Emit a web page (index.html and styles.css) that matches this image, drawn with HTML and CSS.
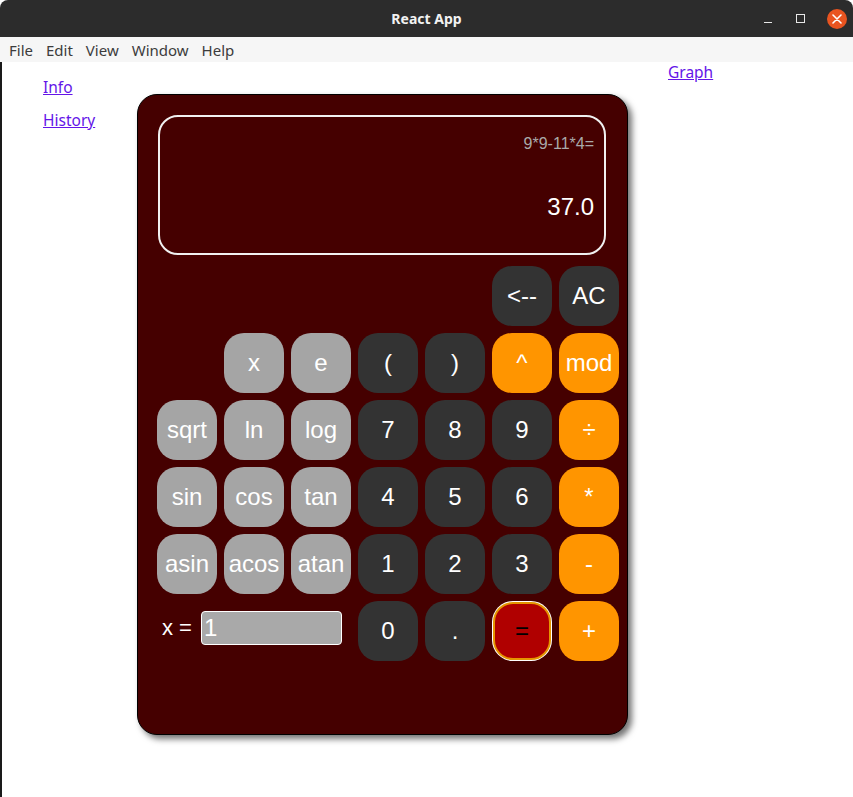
FILE: index.html
```html
<!DOCTYPE html>
<html>
<head>
<meta charset="utf-8">
<title>React App</title>
<link rel="stylesheet" href="styles.css">
</head>
<body>
<div class="titlebar">
  <span class="title">React App</span>
  <div class="controls">
    <span class="ctl-min"></span>
    <span class="ctl-max"></span>
    <span class="ctl-close">
      <svg width="10" height="10" viewBox="0 0 10 10"><path d="M1 1L9 9M9 1L1 9" stroke="#fff" stroke-width="1.6" stroke-linecap="round"/></svg>
    </span>
  </div>
</div>
<div class="menubar">
  <span>File</span><span>Edit</span><span>View</span><span>Window</span><span>Help</span>
</div>
<div class="content">
  <nav class="nav">
    <a href="#" class="link">Info</a>
    <a href="#" class="link">History</a>
  </nav>
  <div class="calc">
    <div class="display">
      <div class="expr">9*9-11*4=</div>
      <div class="result">37.0</div>
    </div>
    <div class="keys">
      <button class="key dark c6">&lt;--</button>
      <button class="key dark">AC</button>

      <button class="key gray c2">x</button>
      <button class="key gray">e</button>
      <button class="key dark">(</button>
      <button class="key dark">)</button>
      <button class="key orange">^</button>
      <button class="key orange">mod</button>

      <button class="key gray">sqrt</button>
      <button class="key gray">ln</button>
      <button class="key gray">log</button>
      <button class="key dark">7</button>
      <button class="key dark">8</button>
      <button class="key dark">9</button>
      <button class="key orange">÷</button>

      <button class="key gray">sin</button>
      <button class="key gray">cos</button>
      <button class="key gray">tan</button>
      <button class="key dark">4</button>
      <button class="key dark">5</button>
      <button class="key dark">6</button>
      <button class="key orange">*</button>

      <button class="key gray">asin</button>
      <button class="key gray">acos</button>
      <button class="key gray">atan</button>
      <button class="key dark">1</button>
      <button class="key dark">2</button>
      <button class="key dark">3</button>
      <button class="key orange">-</button>

      <div class="xvar">
        <span class="xlabel">x =</span>
        <input class="xinput" type="text" value="1">
      </div>
      <button class="key dark">0</button>
      <button class="key dark">.</button>
      <button class="key equals">=</button>
      <button class="key orange">+</button>
    </div>
  </div>
  <a href="#" class="link graph">Graph</a>
</div>
</body>
</html>
```
FILE: styles.css
```css
html, body {
  margin: 0;
  padding: 0;
  background: #ffffff;
}
body {
  width: 853px;
  height: 797px;
  overflow: hidden;
  font-family: "Noto Sans", sans-serif;
}
.titlebar {
  position: relative;
  height: 37px;
  background: #2c2c2c;
  border-radius: 8px 8px 0 0;
  display: flex;
  align-items: center;
  justify-content: center;
}
.title {
  color: #f2f2f2;
  font-family: "Noto Sans", sans-serif;
  font-weight: bold;
  font-size: 14px;
}
.controls {
  position: absolute;
  right: 6px;
  top: 0;
  height: 37px;
  display: flex;
  align-items: center;
  gap: 0;
}
.ctl-min {
  width: 8px;
  height: 1px;
  background: #e8e8e8;
  margin: 8px 24px 0 0;
}
.ctl-max {
  width: 7px;
  height: 7px;
  border: 1px solid #e8e8e8;
  margin-right: 22px;
}
.ctl-close {
  width: 20px;
  height: 20px;
  border-radius: 50%;
  background: #e95420;
  display: flex;
  align-items: center;
  justify-content: center;
}
.menubar {
  height: 25px;
  background: #f6f6f6;
  display: flex;
  align-items: center;
  padding-left: 9px;
  gap: 13px;
  font-size: 15px;
  color: #3c3c3c;
  font-family: "Noto Sans", sans-serif;
}
.content {
  display: flex;
  align-items: flex-start;
  border-left: 2px solid #1a1a1a;
  height: 735px;
}
.nav {
  width: 135px;
  box-sizing: border-box;
  padding-left: 41px;
  padding-top: 14px;
  display: flex;
  flex-direction: column;
  align-items: flex-start;
  gap: 11px;
}
.link {
  color: #6415e8;
  font-size: 15.5px;
  line-height: 22px;
  font-family: "Noto Sans", sans-serif;
}
.graph {
  margin-left: 40px;
  margin-top: -1px;
}
.calc {
  margin-top: 32px;
  width: 491px;
  height: 641px;
  box-sizing: border-box;
  background: #450000;
  border: 1px solid #000;
  border-radius: 20px;
  box-shadow: 4px 4px 6px rgba(0, 0, 0, 0.55);
  padding: 20px 8px 0 19px;
  font-family: "Liberation Sans", Arial, sans-serif;
}
.display {
  margin-left: 1px;
  width: 448px;
  height: 140px;
  box-sizing: border-box;
  border: 2px solid #f0f0f0;
  border-radius: 20px;
  padding: 17px 10px 0 0;
  display: flex;
  flex-direction: column;
  align-items: flex-end;
}
.expr {
  color: #a9a9a9;
  font-size: 16px;
  line-height: 20px;
}
.result {
  color: #ffffff;
  font-size: 24px;
  line-height: 28px;
  margin-top: 39px;
}
.keys {
  margin-top: 11px;
  display: grid;
  grid-template-columns: repeat(7, 60px);
  grid-auto-rows: 60px;
  gap: 7px;
}
.key {
  width: 60px;
  height: 60px;
  border: none;
  border-radius: 20px;
  font-family: "Liberation Sans", Arial, sans-serif;
  font-size: 24px;
  color: #ffffff;
  padding: 0;
  display: flex;
  align-items: center;
  justify-content: center;
}
.c6 { grid-column-start: 6; }
.c2 { grid-column-start: 2; }
.gray { background: #a5a5a5; }
.dark { background: #333333; }
.orange { background: #ff9500; }
.equals {
  background: #b00000;
  color: #000;
  box-sizing: border-box;
  border: 2px solid #e59400;
  box-shadow: 0 0 0 1px #ffffff;
  width: 58px;
  height: 58px;
  margin: 1px;
}
.xvar {
  grid-column: 1 / span 3;
  align-self: start;
  display: flex;
  align-items: center;
  padding-left: 5px;
  margin-top: 10px;
  height: 34px;
  gap: 9px;
}
.xlabel {
  color: #ffffff;
  font-size: 22px;
}
.xinput {
  width: 141px;
  height: 34px;
  box-sizing: border-box;
  background: #a9a9a9;
  border: 1px solid #ffffff;
  border-radius: 4px;
  color: #ffffff;
  font-family: "Liberation Sans", Arial, sans-serif;
  font-size: 24px;
  padding: 0 2px;
  outline: none;
}
```
